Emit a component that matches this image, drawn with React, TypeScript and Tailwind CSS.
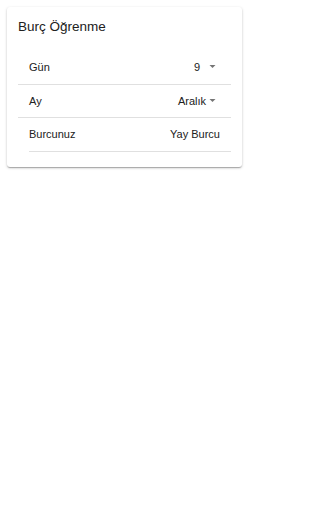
import React from 'react';

const Caret = ({ gap }: { gap: string }) => (
  <svg width="7" height="4" viewBox="0 0 7 4" className={gap}>
    <path d="M0.5 0 L6.5 0 L3.5 3 Z" fill="#757575" />
  </svg>
);

const Row = ({ label, value, gap, inset }: { label: string; value: string; gap?: string; inset?: boolean }) => (
  <div className={`flex h-[33.5px] items-center ${inset ? 'ml-[11px] pl-0' : 'pl-[11px]'} border-b border-[#e0e0e0] pr-[11px]`}>
    <span className="flex-1 text-[11px] text-[#212121]">{label}</span>
    <span className="flex items-center text-[11px] text-[#212121]">
      {value}
      {gap && <Caret gap={gap} />}
      {gap && <span className="w-[4px]" />}
    </span>
  </div>
);

export default function App() {
  return (
    <div className="min-h-[512px] w-[249px] bg-white p-[7px] font-['Liberation_Sans',Arial,sans-serif]">
      <div className="rounded-[3px] bg-white px-[11px] pt-[11px] pb-[15px] shadow-[0_1px_3px_rgba(0,0,0,0.2),0_1px_1px_rgba(0,0,0,0.14),0_2px_1px_-1px_rgba(0,0,0,0.12)]">
        <h1 className="h-[17px] text-[13.5px] leading-[17px] text-[#212121]">Burç Öğrenme</h1>
        <div className="mt-[16px]">
          <Row label="Gün" value="9" gap="ml-[9px]" />
          <Row label="Ay" value="Aralık" gap="ml-[3px]" />
          <Row label="Burcunuz" value="Yay Burcu" inset />
        </div>
      </div>
    </div>
  );
}
